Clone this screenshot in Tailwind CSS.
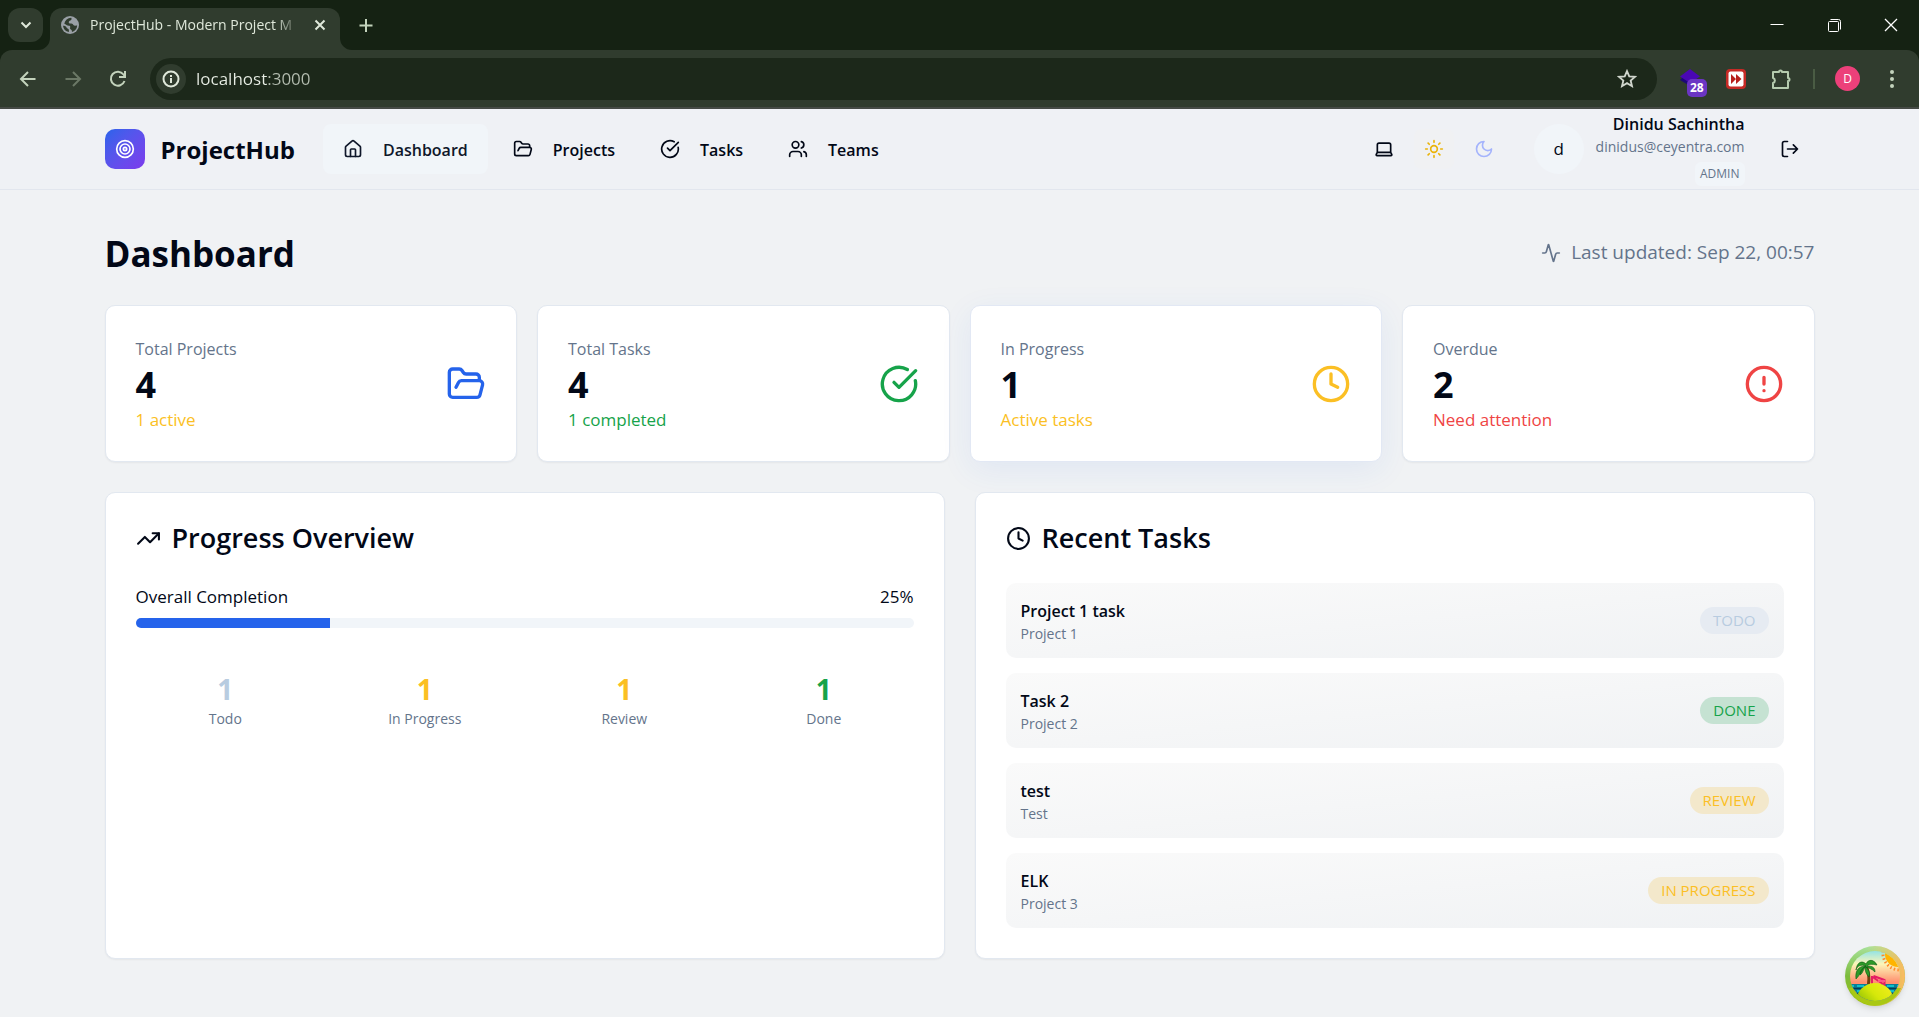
<!DOCTYPE html>
<html lang="en">
<head>
<meta charset="utf-8">
<meta name="viewport" content="width=device-width, initial-scale=1">
<title>ProjectHub - Modern Project Management</title>
<script src="https://cdn.jsdelivr.net/npm/@tailwindcss/browser@4"></script>
</head>
<body class="flex min-h-screen flex-col bg-[#f0f2f4] font-['Open_Sans','Noto_Sans',sans-serif] text-base text-[#020817]">

<!-- shared icon shapes -->
<svg class="hidden" aria-hidden="true">
  <symbol id="folder" viewBox="0 0 24 24"><path d="m6 14 1.5-2.9A2 2 0 0 1 9.24 10H20a2 2 0 0 1 1.94 2.5l-1.54 6a2 2 0 0 1-1.95 1.5H4a2 2 0 0 1-2-2V5a2 2 0 0 1 2-2h3.9a2 2 0 0 1 1.69.9l.81 1.2a2 2 0 0 0 1.67.9H18a2 2 0 0 1 2 2v2"/></symbol>
  <symbol id="check" viewBox="0 0 24 24"><path d="M21.801 10A10 10 0 1 1 17 3.335"/><path d="m9 11 3 3L22 4"/></symbol>
  <symbol id="clock" viewBox="0 0 24 24"><circle cx="12" cy="12" r="10"/><path d="M12 6v6l4 2"/></symbol>
</svg>

<!-- browser window -->
<div class="bg-[#152213] text-[#dfe8da]">
  <div class="flex h-[50px] items-start pl-2">
    <button class="mt-2 flex h-[34px] w-[35px] items-center justify-center rounded-xl bg-[#303c2e]" aria-label="Search tabs">
      <svg class="size-4" viewBox="0 0 16 16" fill="none" stroke="#dfe8da" stroke-width="2"><path d="m3.500 5.500 4.500 4.500 4.500-4.500"/></svg>
    </button>
    <div class="relative ml-[7px] mt-2 flex h-[42px] w-[290px] items-center rounded-t-xl bg-[#303c2e] pl-[11px] pr-3 pb-2">
      <svg class="absolute bottom-0 -left-3 size-3" viewBox="0 0 12 12" fill="#303c2e"><path d="M12 0v12H0A12 12 0 0 0 12 0z"/></svg>
      <svg class="absolute bottom-0 -right-3 size-3" viewBox="0 0 12 12" fill="#303c2e"><path d="M0 0v12h12A12 12 0 0 1 0 0z"/></svg>
      <svg class="mr-[11px] size-[18px] shrink-0" viewBox="0 0 18 18"><circle cx="9" cy="9" r="9" fill="#9aa0a6"/><path d="M10.200 1.800c.8 1 .4 2.200-.8 2.600-1.200.3-1.600 1-1.600 2 0 .9 1 1.200 2.200 1.100 1.500-.1 2 .7 2.400 1.500.5.9 1.700.8 3.800.6a7.200 7.200 0 0 1-5.200 6.400c-.1-1.300-.1-2-1.100-2.500-1-.4-1-1.300-.7-2.200.3-.8-.2-1.500-1.300-1.500-2 0-2.900-1.800-4.600-2.100a6.800 6.800 0 0 1 6.900-5.900z" fill="#303c2e"/><path d="M2 9.800c1.700.1 3 .4 3.500 1.600.6 1.500 2.500 1 2.400 2.800v1.900A7.400 7.400 0 0 1 2 9.800z" fill="#303c2e"/></svg>
      <span class="grow whitespace-nowrap text-sm [mask-image:linear-gradient(to_right,black_88%,transparent)]">ProjectHub - Modern Project M</span>
      <button class="ml-3 shrink-0" aria-label="Close tab"><svg class="size-4" viewBox="0 0 16 16" fill="none" stroke="#dfe8da" stroke-width="2"><path d="m3.500 3.500 9 9m0-9-9 9"/></svg></button>
    </div>
    <button class="ml-[18px] mt-[17px]" aria-label="New tab"><svg class="size-4" viewBox="0 0 16 16" fill="none" stroke="#c3d3bc" stroke-width="2"><path d="M8 2v13M1.500 8.500h13"/></svg></button>
    <div class="ml-auto flex h-[50px] items-center gap-[41px] pr-5 text-white">
      <button aria-label="Minimize"><svg class="size-4" viewBox="0 0 16 16" fill="none" stroke="currentColor"><path d="M1.500 7.500h13"/></svg></button>
      <button aria-label="Restore"><svg class="size-4" viewBox="0 0 16 16" fill="none" stroke="currentColor"><rect x="2.500" y="4.500" width="10" height="10" rx="1"/><path d="M4.500 2.500h8a2 2 0 0 1 2 2v8"/></svg></button>
      <button aria-label="Close window"><svg class="size-4" viewBox="0 0 16 16" fill="none" stroke="currentColor" stroke-width="1.300"><path d="m2 2 12 12m0-12L2 14"/></svg></button>
    </div>
  </div>
  <div class="flex h-[59px] items-center rounded-t-xl border-b-2 border-[#454a45] bg-[#303c2e] pl-[19px] pr-[23px]">
    <button aria-label="Back"><svg class="size-[18px]" viewBox="0 0 18 18" fill="none" stroke="#c3d3bc" stroke-width="2"><path d="M16.500 9H2.500M9 2 2 9l7 7"/></svg></button>
    <button class="ml-[27px]" aria-label="Forward"><svg class="size-[18px]" viewBox="0 0 18 18" fill="none" stroke="#6b7866" stroke-width="2"><path d="M1.500 9h14M9 2l7 7-7 7"/></svg></button>
    <button class="ml-[27px]" aria-label="Reload"><svg class="size-[18px]" viewBox="0 0 18 18" fill="none" stroke="#c3d3bc" stroke-width="2"><path d="M15.500 11A7 7 0 1 1 14.500 4.500L16 6.500"/><path d="M16 1v6h-6"/></svg></button>
    <form class="ml-[23px] flex h-[42px] grow items-center rounded-full bg-[#1c281a] pl-[6px] pr-5">
      <button type="button" class="flex size-[30px] items-center justify-center rounded-full bg-[#303c2e]" aria-label="Site information"><svg class="size-[18px]" viewBox="0 0 18 18" fill="none" stroke="#dfe8da" stroke-width="2"><circle cx="9" cy="9" r="7.500"/><path d="M9 8v5M9 5v2"/></svg></button>
      <input aria-label="Address" value="localhost:3000" class="ml-[10px] min-w-0 grow bg-transparent bg-[linear-gradient(to_right,#e8eee5_71px,#b4bdb0_71px)] bg-clip-text text-[17px] text-transparent outline-none">
      <button type="button" aria-label="Bookmark"><svg class="size-5" viewBox="0 0 24 24" fill="none" stroke="#d0d6cd" stroke-width="2.200"><path d="m12 2.500 2.700 6.300 6.900.6-5.200 4.500 1.600 6.700-6-3.600-6 3.600 1.600-6.700L2.400 9.400l6.900-.6z"/></svg></button>
    </form>
    <div class="ml-[23px] flex items-center">
      <button class="relative" aria-label="Extension, 28 items"><svg class="size-5" viewBox="0 0 20 20"><path d="m0 11 10 6 4-5-11-4z" fill="#1d0878"/><path d="M10 0 20 7.500 10 14 0 7.500z" fill="#4a07b4"/></svg>
        <span class="absolute top-[10px] left-[7px] rounded-[5px] bg-[#6b35c4] px-[3px] text-xs leading-[18px] font-bold text-white">28</span></button>
      <button class="ml-[26px]" aria-label="Video speed"><svg class="size-5" viewBox="0 0 20 20"><rect width="20" height="20" rx="4" fill="#c62a26"/><rect x="2.500" y="2.500" width="15" height="15" rx="2" fill="#fff"/><path d="m5 5 5 5-5 5zM10 5l5.500 5-5.500 5z" fill="#b8201c"/></svg></button>
      <button class="ml-[24px]" aria-label="Extensions"><svg class="size-[22px]" viewBox="0 0 22 22" fill="none" stroke="#b5cbae" stroke-width="2" stroke-linejoin="round"><path d="M3 4h6a1.500 1.500 0 0 1 3 0h6v6a1.500 1.500 0 0 1 0 3v7H3v-5a2.600 2.600 0 0 0 0-5z"/></svg></button>
      <span class="ml-[21px] h-5 w-[2px] bg-[#4a5c44]"></span>
      <button class="ml-[20px] flex size-[25px] items-center justify-center rounded-full bg-[#ec407a] text-xs text-white">D</button>
      <button class="ml-[28px]" aria-label="Menu"><svg class="h-5 w-2" viewBox="0 0 8 20" fill="#c3d3bc"><circle cx="4" cy="3" r="2"/><circle cx="4" cy="10" r="2"/><circle cx="4" cy="17" r="2"/></svg></button>
    </div>
  </div>
</div>

<!-- application header -->
<header class="border-b border-[#e2e6ee] bg-[#eff1f5]">
  <div class="mx-auto flex h-[80px] max-w-[1750px] items-center px-5">
    <a href="#" class="flex items-center gap-4">
      <span class="flex size-10 items-center justify-center rounded-[10px] bg-linear-to-br from-[#2563eb] to-[#7c3aed]"><svg class="size-5" viewBox="0 0 24 24" fill="none" stroke="#fff" stroke-width="2"><circle cx="12" cy="12" r="10"/><circle cx="12" cy="12" r="6"/><circle cx="12" cy="12" r="2"/></svg></span>
      <span class="pt-0.5 text-2xl font-bold">ProjectHub</span>
    </a>
    <nav class="ml-7 flex gap-[5px] font-semibold">
      <a href="#" class="flex h-[50px] items-center gap-5 rounded-lg bg-[#f1f5f9] px-5 text-[#0f172a]"><svg class="size-5" viewBox="0 0 24 24" fill="none" stroke="currentColor" stroke-width="2" stroke-linecap="round" stroke-linejoin="round"><path d="M15 21v-8a1 1 0 0 0-1-1h-4a1 1 0 0 0-1 1v8"/><path d="M3 10a2 2 0 0 1 .709-1.528l7-5.999a2 2 0 0 1 2.582 0l7 5.999A2 2 0 0 1 21 10v9a2 2 0 0 1-2 2H5a2 2 0 0 1-2-2z"/></svg><span class="pt-0.5">Dashboard</span></a>
      <a href="#" class="flex h-[50px] items-center gap-5 rounded-lg px-5"><svg class="size-5" fill="none" stroke="currentColor" stroke-width="2" stroke-linecap="round" stroke-linejoin="round"><use href="#folder"/></svg><span class="pt-0.5">Projects</span></a>
      <a href="#" class="flex h-[50px] items-center gap-5 rounded-lg px-5"><svg class="size-5" fill="none" stroke="currentColor" stroke-width="2" stroke-linecap="round" stroke-linejoin="round"><use href="#check"/></svg><span class="pt-0.5">Tasks</span></a>
      <a href="#" class="flex h-[50px] items-center gap-5 rounded-lg px-5"><svg class="size-5" viewBox="0 0 24 24" fill="none" stroke="currentColor" stroke-width="2" stroke-linecap="round" stroke-linejoin="round"><path d="M16 21v-2a4 4 0 0 0-4-4H6a4 4 0 0 0-4 4v2"/><circle cx="9" cy="7" r="4"/><path d="M22 21v-2a4 4 0 0 0-3-3.870M16 3.130a4 4 0 0 1 0 7.750"/></svg><span class="pt-0.5">Teams</span></a>
    </nav>
    <div class="ml-auto flex items-center">
      <div class="flex gap-[10px]">
        <button class="flex size-10 items-center justify-center rounded-lg" aria-label="System theme"><svg class="size-5" viewBox="0 0 24 24" fill="none" stroke="currentColor" stroke-width="2" stroke-linecap="round" stroke-linejoin="round"><path d="M20 16V7a2 2 0 0 0-2-2H6a2 2 0 0 0-2 2v9m16 0H4m16 0 1.280 2.550a1 1 0 0 1-.9 1.450H3.620a1 1 0 0 1-.9-1.450L4 16"/></svg></button>
        <button class="flex size-10 items-center justify-center rounded-lg bg-[#f0f1f3]" aria-label="Light theme"><svg class="size-5" viewBox="0 0 24 24" fill="none" stroke="#eab308" stroke-width="2" stroke-linecap="round" stroke-linejoin="round"><circle cx="12" cy="12" r="4"/><path d="M12 2v2M12 20v2m-7.070-17.070 1.410 1.410m11.320 11.320 1.410 1.410M2 12h2M20 12h2M6.340 17.660l-1.410 1.410M19.070 4.930l-1.410 1.410"/></svg></button>
        <button class="flex size-10 items-center justify-center rounded-lg" aria-label="Dark theme"><svg class="size-5" viewBox="0 0 24 24" fill="none" stroke="#a5b4fc" stroke-width="2" stroke-linecap="round" stroke-linejoin="round"><path d="M12 3a6 6 0 0 0 9 9 9 9 0 1 1-9-9Z"/></svg></button>
      </div>
      <span class="ml-[30px] flex size-[50px] items-center justify-center rounded-full bg-[#f1f5f9] text-[17px]">d</span>
      <div class="ml-3 flex flex-col items-end">
        <span class="leading-[25px] font-semibold">Dinidu Sachintha</span>
        <span class="text-sm leading-5 text-[#64748b]">dinidus@ceyentra.com</span>
        <span class="mt-[5px] rounded-md bg-[#f1f5f9] px-[5px] py-[2px] text-xs leading-5 text-[#64748b]">ADMIN</span>
      </div>
      <button class="ml-5 flex size-[50px] items-center justify-center" aria-label="Log out"><svg class="size-5" viewBox="0 0 24 24" fill="none" stroke="currentColor" stroke-width="2" stroke-linecap="round" stroke-linejoin="round"><path d="m16 17 5-5-5-5M21 12H9M9 21H5a2 2 0 0 1-2-2V5a2 2 0 0 1 2-2h4"/></svg></button>
    </div>
  </div>
</header>

<main class="mx-auto flex w-full max-w-[1750px] flex-col gap-[30px] px-5 pt-10 pb-10">
  <div class="flex items-center justify-between">
    <h1 class="pt-0.5 text-[35px] leading-[43px] font-bold">Dashboard</h1>
    <p class="flex items-center gap-[10px] text-[19px] text-[#64748b]"><svg class="size-5" viewBox="0 0 24 24" fill="none" stroke="currentColor" stroke-width="2" stroke-linecap="round" stroke-linejoin="round"><path d="M22 12h-2.480a2 2 0 0 0-1.930 1.460l-2.350 8.360a.25.25 0 0 1-.48 0L9.240 2.180a.25.25 0 0 0-.48 0l-2.350 8.360A2 2 0 0 1 4.490 12H2"/></svg>Last updated: Sep 22, 00:57</p>
  </div>

  <div class="grid grid-cols-4 gap-5">
    <section class="flex h-[157px] items-center justify-between rounded-[10px] border border-[#e2e8f0] bg-white px-[30px] shadow-xs">
      <div class="pt-0.5"><h2 class="leading-[25px] text-[#64748b]">Total Projects</h2><p class="text-4xl leading-[45px] font-bold">4</p><p class="text-[17px] leading-[25px] text-[#fbbf24]">1 active</p></div>
      <svg class="size-10" fill="none" stroke="#2563eb" stroke-width="2" stroke-linecap="round" stroke-linejoin="round"><use href="#folder"/></svg>
    </section>
    <section class="flex h-[157px] items-center justify-between rounded-[10px] border border-[#e2e8f0] bg-white px-[30px] shadow-xs">
      <div class="pt-0.5"><h2 class="leading-[25px] text-[#64748b]">Total Tasks</h2><p class="text-4xl leading-[45px] font-bold">4</p><p class="text-[17px] leading-[25px] text-[#16a34a]">1 completed</p></div>
      <svg class="size-10" fill="none" stroke="#16a34a" stroke-width="2" stroke-linecap="round" stroke-linejoin="round"><use href="#check"/></svg>
    </section>
    <section class="flex h-[157px] items-center justify-between rounded-[10px] border border-[#e2e8f4] bg-white px-[30px] shadow-[0_8px_32px_rgba(37,99,235,0.080)]">
      <div class="pt-0.5"><h2 class="leading-[25px] text-[#64748b]">In Progress</h2><p class="text-4xl leading-[45px] font-bold">1</p><p class="text-[17px] leading-[25px] text-[#fbbf24]">Active tasks</p></div>
      <svg class="size-10" fill="none" stroke="#fbbf24" stroke-width="2" stroke-linecap="round" stroke-linejoin="round"><use href="#clock"/></svg>
    </section>
    <section class="flex h-[157px] items-center justify-between rounded-[10px] border border-[#e2e8f0] bg-white px-[30px] shadow-xs">
      <div class="pt-0.5"><h2 class="leading-[25px] text-[#64748b]">Overdue</h2><p class="text-4xl leading-[45px] font-bold">2</p><p class="text-[17px] leading-[25px] text-[#ef4444]">Need attention</p></div>
      <svg class="size-10" viewBox="0 0 24 24" fill="none" stroke="#ef4444" stroke-width="2" stroke-linecap="round" stroke-linejoin="round"><circle cx="12" cy="12" r="10"/><path d="M12 8v4M12 16h.01"/></svg>
    </section>
  </div>

  <div class="grid grid-cols-2 gap-[30px]">
    <section class="rounded-[10px] border border-[#e2e8f0] bg-white p-[30px] shadow-xs">
      <h2 class="flex items-center gap-[11px] text-[27px] leading-[30px] font-semibold"><svg class="size-[25px]" viewBox="0 0 24 24" fill="none" stroke="currentColor" stroke-width="2" stroke-linecap="round" stroke-linejoin="round"><path d="m22 7-8.500 8.500-5-5L2 17"/><path d="M16 7h6v6"/></svg>Progress Overview</h2>
      <div class="mt-[31px] flex justify-between text-[17px] leading-[25px]"><span>Overall Completion</span><span>25%</span></div>
      <div class="mt-[9px] h-[10px] overflow-hidden rounded-full bg-[#f1f5f9]" role="progressbar" aria-label="Overall Completion" aria-valuenow="25"><div class="h-full bg-[#2563eb]" style="width:25%"></div></div>
      <dl class="mt-[41px] grid grid-cols-4 gap-5 text-center">
        <div class="flex flex-col-reverse"><dt class="text-sm leading-5 text-[#64748b]">Todo</dt><dd class="text-[28px] leading-10 font-bold text-[#b8cce0]">1</dd></div>
        <div class="flex flex-col-reverse"><dt class="text-sm leading-5 text-[#64748b]">In Progress</dt><dd class="text-[28px] leading-10 font-bold text-[#fbbf24]">1</dd></div>
        <div class="flex flex-col-reverse"><dt class="text-sm leading-5 text-[#64748b]">Review</dt><dd class="text-[28px] leading-10 font-bold text-[#fbbf24]">1</dd></div>
        <div class="flex flex-col-reverse"><dt class="text-sm leading-5 text-[#64748b]">Done</dt><dd class="text-[28px] leading-10 font-bold text-[#16a34a]">1</dd></div>
      </dl>
    </section>
    <section class="rounded-[10px] border border-[#e2e8f0] bg-white p-[30px] shadow-xs">
      <h2 class="flex items-center gap-[11px] text-[27px] leading-[30px] font-semibold"><svg class="size-[25px]" fill="none" stroke="currentColor" stroke-width="2" stroke-linecap="round" stroke-linejoin="round"><use href="#clock"/></svg>Recent Tasks</h2>
      <ul class="mt-[30px] flex flex-col gap-[15px]">
        <li class="flex h-[75px] items-center justify-between rounded-[10px] bg-linear-to-br from-[#fafafa] to-[#f0f2f4] px-[15px]"><div class="pt-0.5"><h3 class="leading-[25px] font-semibold">Project 1 task</h3><p class="text-sm leading-5 text-[#64748b]">Project 1</p></div><span class="rounded-full bg-[#e6ebf2] px-[13px] text-[15px] leading-[27px] font-medium text-[#b8cce0]">TODO</span></li>
        <li class="flex h-[75px] items-center justify-between rounded-[10px] bg-linear-to-br from-[#fafafa] to-[#f0f2f4] px-[15px]"><div class="pt-0.5"><h3 class="leading-[25px] font-semibold">Task 2</h3><p class="text-sm leading-5 text-[#64748b]">Project 2</p></div><span class="rounded-full bg-[#c5e2d2] px-[13px] text-[15px] leading-[27px] font-medium text-[#16a34a]">DONE</span></li>
        <li class="flex h-[75px] items-center justify-between rounded-[10px] bg-linear-to-br from-[#fafafa] to-[#f0f2f4] px-[15px]"><div class="pt-0.5"><h3 class="leading-[25px] font-semibold">test</h3><p class="text-sm leading-5 text-[#64748b]">Test</p></div><span class="rounded-full bg-[#f3e8cb] px-[13px] text-[15px] leading-[27px] font-medium text-[#fbbf24]">REVIEW</span></li>
        <li class="flex h-[75px] items-center justify-between rounded-[10px] bg-linear-to-br from-[#fafafa] to-[#f0f2f4] px-[15px]"><div class="pt-0.5"><h3 class="leading-[25px] font-semibold">ELK</h3><p class="text-sm leading-5 text-[#64748b]">Project 3</p></div><span class="rounded-full bg-[#f3e8cb] px-[13px] text-[15px] leading-[27px] font-medium text-[#fbbf24]">IN PROGRESS</span></li>
      </ul>
    </section>
  </div>
</main>

<!-- floating developer tools button -->
<button class="fixed right-[14px] bottom-[11px] size-[60px] rounded-full shadow-md" aria-label="Open query devtools">
  <svg class="size-full" viewBox="0 0 60 60">
    <defs>
      <linearGradient id="sky" x1="0" y1="0" x2="0" y2="1"><stop offset="0" stop-color="#6bdcf5"/><stop offset=".3" stop-color="#fdf6b8"/><stop offset=".6" stop-color="#ff9170"/></linearGradient>
      <linearGradient id="hill" x1="0" y1="1" x2="1" y2="0"><stop offset="0" stop-color="#4c9a00"/><stop offset=".6" stop-color="#d6e80a"/><stop offset="1" stop-color="#f8ee20"/></linearGradient>
      <linearGradient id="rimv" x1="0" y1="0" x2="0" y2="1"><stop offset="0" stop-color="#a8e29c"/><stop offset=".5" stop-color="#7cbc3c"/><stop offset="1" stop-color="#9fbf10"/></linearGradient>
      <linearGradient id="rimh" x1="0" y1="0" x2="1" y2="0"><stop offset=".35" stop-color="#fdd27a" stop-opacity="0"/><stop offset="1" stop-color="#fdba60"/></linearGradient>
      <clipPath id="disc"><circle cx="30" cy="30" r="25"/></clipPath>
    </defs>
    <circle cx="30" cy="30" r="30" fill="url(#rimv)"/><circle cx="30" cy="30" r="30" fill="url(#rimh)"/>
    <path d="M4 42a28 28 0 0 0 52 0z" fill="#a9c814"/>
    <g clip-path="url(#disc)">
      <path d="M0 0h60v60H0z" fill="url(#sky)"/>
      <circle cx="53" cy="8" r="13" fill="#ffb400"/>
      <path d="M38 5a17 17 0 0 0 17 19" fill="none" stroke="#ff8a2a" stroke-width="3" stroke-dasharray="1.500 2.200"/>
      <path d="M0 38h60v22H0z" fill="#0a7e96"/><path d="M2 40h56M2 45h56" stroke="#10d5dc" stroke-width="1.500" stroke-dasharray="7 3"/><path d="M2 42.500h56M2 48h56" stroke="#013f58" stroke-width="1.500"/>
      <path d="M27 30v9M27.500 31l12 8v-5l-11-4" fill="none" stroke="#e51d63" stroke-width="2"/><path d="M33 35h7" stroke="#ff5588" stroke-width="2"/>
      <path d="M22 38c1-7 0-12-2-17l3-1c2 6 3 12 2 18z" fill="#74400f"/>
      <path d="M11 33c-1-8 2-13 10-13-5 3-4 7-10 13zM21 20c-5-2-9 0-10 4 1-8 6-10 10-6 2-5 8-5 11 1-5-1-8-1-10 1 5 0 8 1 8 6-3-3-6-4-9-5 4 4 4 7 3 10-3-3-4-6-4-10-2 4-3 7-5 8 0-4 2-7 6-9z" fill="#2d9a28" stroke="#0b5c14" stroke-width=".6"/>
      <circle cx="30" cy="56" r="19" fill="url(#hill)"/>
    </g>
  </svg>
</button>
</body>
</html>
